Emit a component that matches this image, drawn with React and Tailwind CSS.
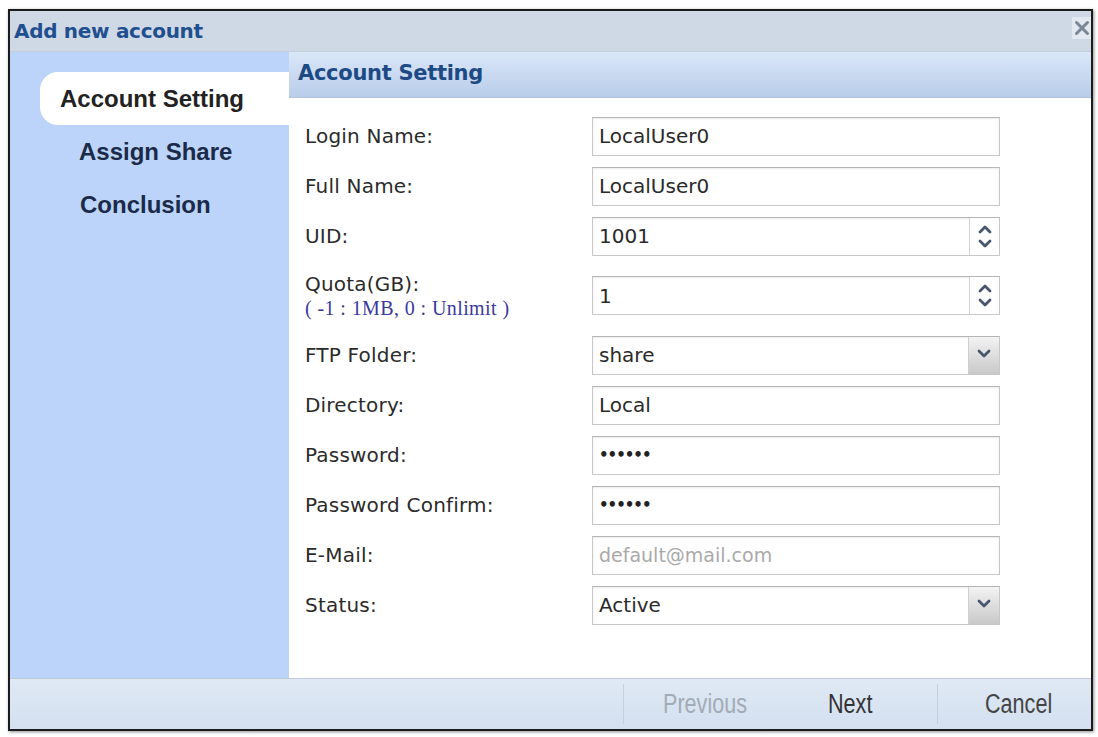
import React from "react";

const Chevron = ({ dir }) => (
  <svg width="14" height="9" viewBox="0 0 14 9">
    <path
      d={dir === "up" ? "M2 7 L7 2 L12 7" : "M2 2 L7 7 L12 2"}
      fill="none"
      stroke="#47556f"
      strokeWidth="2.8"
      strokeLinecap="round"
      strokeLinejoin="round"
    />
  </svg>
);

function Spinner() {
  return (
    <div className="w-[30px] h-full border-l border-[#d2d2d2] flex flex-col items-center justify-center gap-[5px] bg-white">
      <Chevron dir="up" />
      <Chevron dir="down" />
    </div>
  );
}

function DropButton() {
  return (
    <div className="w-[31px] h-full border-l border-[#cfcfcf] flex items-center justify-center pb-[4px] bg-gradient-to-b from-[#f3f3f3] to-[#c9c9c9]">
      <Chevron dir="down" />
    </div>
  );
}

function Field({ value, kind, muted, dots }) {
  return (
    <div className="w-[408px] h-[39px] border border-[#c8c8c8] border-t-[#b5b5b5] bg-white flex shadow-[inset_0_1px_2px_rgba(0,0,0,0.08)]">
      <div
        className={
          "flex-1 flex items-center pl-[6px] font-['DejaVu_Sans'] " +
          (dots
            ? "text-[15px] font-bold tracking-[-1px] text-[#222]"
            : muted
            ? "text-[19px] text-[#a9a9a9]"
            : "text-[20px] text-[#2a2a2a]")
        }
      >
        {value}
      </div>
      {kind === "spin" && <Spinner />}
      {kind === "select" && <DropButton />}
    </div>
  );
}

const rows = [
  { label: "Login Name:", value: "LocalUser0" },
  { label: "Full Name:", value: "LocalUser0" },
  { label: "UID:", value: "1001", kind: "spin" },
  { label: "Quota(GB):", note: "( -1 : 1MB, 0 : Unlimit )", value: "1", kind: "spin", tall: true },
  { label: "FTP Folder:", value: "share", kind: "select" },
  { label: "Directory:", value: "Local" },
  { label: "Password:", value: "••••••", dots: true },
  { label: "Password Confirm:", value: "••••••", dots: true },
  { label: "E-Mail:", value: "default@mail.com", muted: true },
  { label: "Status:", value: "Active", kind: "select" },
];

export default function App() {
  return (
    <div className="w-[1098px] h-[737px] bg-white pt-[9px] pl-[8px]">
      <div className="w-[1085px] h-[722px] border-2 border-[#1b1b1b] shadow-[1px_1px_3px_rgba(0,0,0,0.45)] flex flex-col bg-white">
        {/* title bar */}
        <div className="h-[41px] flex bg-[#cfd9e5] border-b border-[#c3cfdd]">
          <div className="pl-[4px] pt-[5px] text-[20px] font-bold font-['DejaVu_Sans'] text-[#1f4f8f] tracking-[-0.3px]">
            Add new account
          </div>
          <div className="ml-auto mt-[6px] w-[19px] h-[22px] bg-[#e2e9f2] flex items-center justify-start pl-[2px]">
            <svg width="16" height="16" viewBox="0 0 16 16">
              <path d="M2.5 2.5 L13.5 13.5 M13.5 2.5 L2.5 13.5" stroke="#7a8595" strokeWidth="3" strokeLinecap="round" />
            </svg>
          </div>
        </div>

        {/* body */}
        <div className="flex-1 flex min-h-0">
          {/* steps */}
          <div className="w-[279px] bg-[#bcd4fa] pt-[20px] font-['Liberation_Sans'] font-bold text-[24px]">
            <div className="ml-[30px] h-[53px] bg-white rounded-l-[18px] flex items-center pl-[20px] text-[#222]">
              Account Setting
            </div>
            <div className="h-[53px] flex items-center pl-[69px] text-[#1b2a48]">Assign Share</div>
            <div className="h-[53px] flex items-center pl-[70px] text-[#1b2a48]">Conclusion</div>
          </div>

          {/* content */}
          <div className="flex-1 flex flex-col bg-white">
            <div className="h-[46px] bg-gradient-to-b from-[#dae7f8] to-[#b9cdea] border-b border-[#b0c3dd] flex items-center pl-[9px] pb-[2px] text-[21px] font-bold font-['DejaVu_Sans'] text-[#1d4a85] tracking-[-0.3px]">
              Account Setting
            </div>
            <div className="pt-[13px] pl-[16px]">
              {rows.map((r) => (
                <div key={r.label} className={"flex items-center " + (r.tall ? "h-[69px]" : "h-[50px]")}>
                  <div className="w-[287px] font-['DejaVu_Sans'] text-[#2b2b2b]">
                    <div className="text-[20px] leading-[24px] tracking-[0.2px]">{r.label}</div>
                    {r.note && (
                      <div className="font-['Liberation_Serif'] text-[20px] leading-[24px] tracking-[0.4px] text-[#3a3a9c]">
                        {r.note}
                      </div>
                    )}
                  </div>
                  <Field value={r.value} kind={r.kind} muted={r.muted} dots={r.dots} />
                </div>
              ))}
            </div>
          </div>
        </div>

        {/* footer */}
        <div className="h-[51px] border-t border-[#bccadb] bg-gradient-to-b from-[#e0e9f5] to-[#d3e0f0] flex items-center font-['Liberation_Sans'] text-[27px]">
          <div className="flex-1" />
          <div className="w-px h-[40px] bg-[#c6d0dc]" />
          <div className="w-[313px] flex items-center">
            <span className="ml-[39px] w-[125px] inline-block origin-left scale-x-[0.8] text-[#a3abb6]">Previous</span>
            <span className="ml-[40px] inline-block origin-left scale-x-[0.8] text-[#333]">Next</span>
          </div>
          <div className="w-px h-[40px] bg-[#c6d0dc]" />
          <div className="w-[153px] flex items-center">
            <span className="ml-[47px] inline-block origin-left scale-x-[0.8] text-[#444]">Cancel</span>
          </div>
        </div>
      </div>
    </div>
  );
}
